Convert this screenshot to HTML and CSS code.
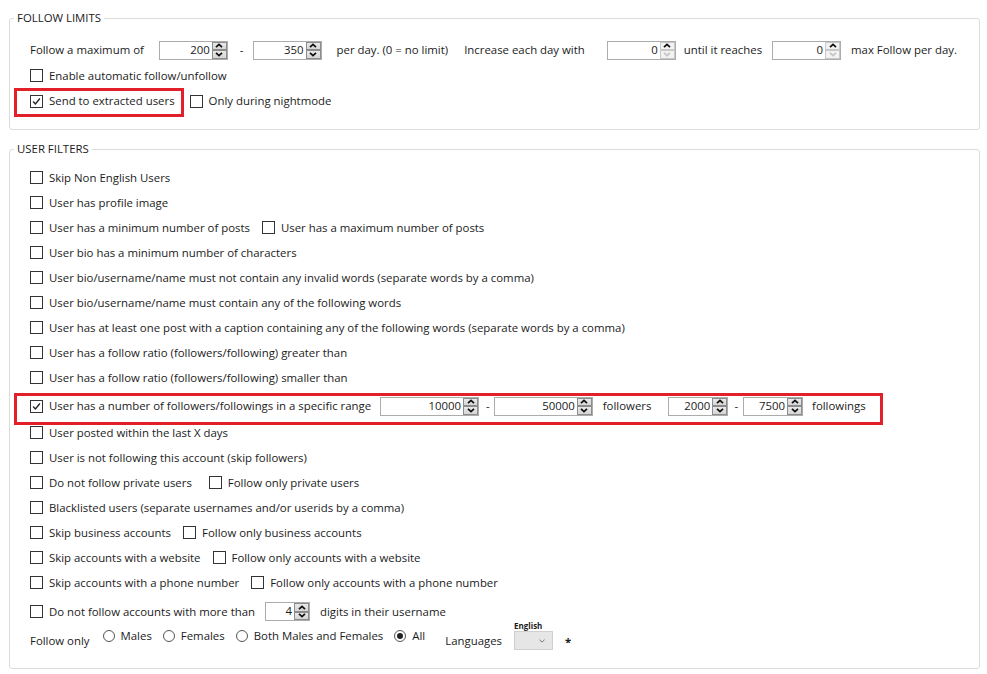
FILE: index.html
```html
<!DOCTYPE html>
<html lang="en">
<head>
    <meta charset="UTF-8">
    <title>Follow settings</title>
    <link rel="stylesheet" href="styles.css">
</head>
<body>
<div class="page">

    <fieldset class="group limits">
        <legend>FOLLOW LIMITS</legend>

        <div class="row row-first">
            <span class="text">Follow a maximum of</span>
            <span class="spin spin-md gap-15"><span class="spin-value">200</span><span class="spin-buttons"><span class="spin-btn"><svg viewBox="0 0 8 5"><polyline points="1,4.2 4,1.4 7,4.2"/></svg></span><span class="spin-btn"><svg viewBox="0 0 8 5"><polyline points="1,0.8 4,3.6 7,0.8"/></svg></span></span></span>
            <span class="text gap-12">-</span>
            <span class="spin spin-md gap-9"><span class="spin-value">350</span><span class="spin-buttons"><span class="spin-btn"><svg viewBox="0 0 8 5"><polyline points="1,4.2 4,1.4 7,4.2"/></svg></span><span class="spin-btn"><svg viewBox="0 0 8 5"><polyline points="1,0.8 4,3.6 7,0.8"/></svg></span></span></span>
            <span class="text gap-15">per day. (0 = no limit)</span>
            <span class="text gap-16">Increase each day with</span>
            <span class="spin spin-md gap-22"><span class="spin-value">0</span><span class="spin-buttons"><span class="spin-btn soft"><svg viewBox="0 0 8 5"><polyline points="1,4.2 4,1.4 7,4.2"/></svg></span><span class="spin-btn soft off"><svg viewBox="0 0 8 5"><polyline points="1,0.8 4,3.6 7,0.8"/></svg></span></span></span>
            <span class="text gap-8">until it reaches</span>
            <span class="spin spin-md gap-10"><span class="spin-value">0</span><span class="spin-buttons"><span class="spin-btn soft"><svg viewBox="0 0 8 5"><polyline points="1,4.2 4,1.4 7,4.2"/></svg></span><span class="spin-btn soft off"><svg viewBox="0 0 8 5"><polyline points="1,0.8 4,3.6 7,0.8"/></svg></span></span></span>
            <span class="text gap-10">max Follow per day.</span>
        </div>

        <div class="row">
            <label class="check"><span class="box"></span>Enable automatic follow/unfollow</label>
        </div>

        <div class="row row-marked">
            <span class="mark mark-small">
                <label class="check"><span class="box checked"><svg viewBox="0 0 13 13"><polyline points="2.5,6.5 5.2,9.3 10.5,3"/></svg></span>Send to extracted users</label>
            </span>
            <label class="check gap-6 beside-mark"><span class="box"></span>Only during nightmode</label>
        </div>
    </fieldset>

    <fieldset class="group filters">
        <legend>USER FILTERS</legend>

        <div class="row"><label class="check"><span class="box"></span>Skip Non English Users</label></div>
        <div class="row"><label class="check"><span class="box"></span>User has profile image</label></div>
        <div class="row">
            <label class="check"><span class="box"></span>User has a minimum number of posts</label>
            <label class="check gap-12"><span class="box"></span>User has a maximum number of posts</label>
        </div>
        <div class="row"><label class="check"><span class="box"></span>User bio has a minimum number of characters</label></div>
        <div class="row"><label class="check"><span class="box"></span>User bio/username/name must not contain any invalid words (separate words by a comma)</label></div>
        <div class="row"><label class="check"><span class="box"></span>User bio/username/name must contain any of the following words</label></div>
        <div class="row"><label class="check"><span class="box"></span>User has at least one post with a caption containing any of the following words (separate words by a comma)</label></div>
        <div class="row"><label class="check"><span class="box"></span>User has a follow ratio (followers/following) greater than</label></div>
        <div class="row"><label class="check"><span class="box"></span>User has a follow ratio (followers/following) smaller than</label></div>

        <div class="mark mark-range">
            <label class="check"><span class="box checked"><svg viewBox="0 0 13 13"><polyline points="2.5,6.5 5.2,9.3 10.5,3"/></svg></span>User has a number of followers/followings in a specific range</label>
            <span class="spin spin-lg gap-9"><span class="spin-value">10000</span><span class="spin-buttons"><span class="spin-btn"><svg viewBox="0 0 8 5"><polyline points="1,4.2 4,1.4 7,4.2"/></svg></span><span class="spin-btn"><svg viewBox="0 0 8 5"><polyline points="1,0.8 4,3.6 7,0.8"/></svg></span></span></span>
            <span class="text gap-7">-</span>
            <span class="spin spin-lg gap-4"><span class="spin-value">50000</span><span class="spin-buttons"><span class="spin-btn"><svg viewBox="0 0 8 5"><polyline points="1,4.2 4,1.4 7,4.2"/></svg></span><span class="spin-btn"><svg viewBox="0 0 8 5"><polyline points="1,0.8 4,3.6 7,0.8"/></svg></span></span></span>
            <span class="text gap-10">followers</span>
            <span class="spin spin-sm gap-17"><span class="spin-value">2000</span><span class="spin-buttons"><span class="spin-btn"><svg viewBox="0 0 8 5"><polyline points="1,4.2 4,1.4 7,4.2"/></svg></span><span class="spin-btn"><svg viewBox="0 0 8 5"><polyline points="1,0.8 4,3.6 7,0.8"/></svg></span></span></span>
            <span class="text gap-6">-</span>
            <span class="spin spin-sm gap-5"><span class="spin-value">7500</span><span class="spin-buttons"><span class="spin-btn"><svg viewBox="0 0 8 5"><polyline points="1,4.2 4,1.4 7,4.2"/></svg></span><span class="spin-btn"><svg viewBox="0 0 8 5"><polyline points="1,0.8 4,3.6 7,0.8"/></svg></span></span></span>
            <span class="text gap-9">followings</span>
        </div>

        <div class="row"><label class="check"><span class="box"></span>User posted within the last X days</label></div>
        <div class="row"><label class="check"><span class="box"></span>User is not following this account (skip followers)</label></div>
        <div class="row">
            <label class="check"><span class="box"></span>Do not follow private users</label>
            <label class="check gap-17"><span class="box"></span>Follow only private users</label>
        </div>
        <div class="row"><label class="check"><span class="box"></span>Blacklisted users (separate usernames and/or userids by a comma)</label></div>
        <div class="row">
            <label class="check"><span class="box"></span>Skip business accounts</label>
            <label class="check gap-12"><span class="box"></span>Follow only business accounts</label>
        </div>
        <div class="row">
            <label class="check"><span class="box"></span>Skip accounts with a website</label>
            <label class="check gap-12"><span class="box"></span>Follow only accounts with a website</label>
        </div>
        <div class="row">
            <label class="check"><span class="box"></span>Skip accounts with a phone number</label>
            <label class="check gap-12"><span class="box"></span>Follow only accounts with a phone number</label>
        </div>

        <div class="row row-digits">
            <label class="check"><span class="box"></span>Do not follow accounts with more than</label>
            <span class="spin spin-xs gap-10"><span class="spin-value">4</span><span class="spin-buttons"><span class="spin-btn"><svg viewBox="0 0 8 5"><polyline points="1,4.2 4,1.4 7,4.2"/></svg></span><span class="spin-btn"><svg viewBox="0 0 8 5"><polyline points="1,0.8 4,3.6 7,0.8"/></svg></span></span></span>
            <span class="text gap-10">digits in their username</span>
        </div>

        <div class="row row-gender">
            <span class="text follow-only">Follow only</span>
            <div class="radios">
                <label class="radio"><span class="dot"></span>Males</label>
                <label class="radio"><span class="dot"></span>Females</label>
                <label class="radio"><span class="dot"></span>Both Males and Females</label>
                <label class="radio"><span class="dot on"></span>All</label>
            </div>
            <span class="text languages">Languages</span>
            <div class="lang">
                <span class="lang-label">English</span>
                <span class="select"><svg viewBox="0 0 7 4"><polyline points="0.5,0.5 3.5,3.3 6.5,0.5"/></svg></span>
            </div>
            <span class="star">*</span>
        </div>
    </fieldset>

</div>
</body>
</html>
```

FILE: styles.css
```css
* {
    margin: 0;
    padding: 0;
    box-sizing: border-box;
}

body {
    font-family: "Open Sans", "Noto Sans", sans-serif;
    font-size: 11.4px;
    color: #1b1b1b;
    background: #fff;
}

.page {
    padding: 10px 7px 0 9px;
}

.group {
    border: 1px solid #dcdcdc;
    border-radius: 3px;
    padding: 0 10px 0 20px;
}

.group legend {
    margin-left: -16px;
    padding: 0 3px;
    font-size: 11.4px;
    line-height: 16px;
}

.limits {
    padding-top: 11px;
    padding-bottom: 12px;
}

.filters {
    margin-top: 11px;
    padding-top: 8px;
    padding-bottom: 14px;
}

.row {
    display: flex;
    align-items: center;
    height: 25px;
    white-space: nowrap;
}

.row-first {
    height: 26px;
}

.row-marked {
    height: 29px;
}

.text {
    line-height: 16px;
}

/* spacing between inline items */
.gap-4 { margin-left: 4px; }
.gap-5 { margin-left: 5px; }
.gap-6 { margin-left: 6px; }
.gap-7 { margin-left: 7px; }
.gap-8 { margin-left: 8px; }
.gap-9 { margin-left: 9px; }
.gap-10 { margin-left: 10px; }
.gap-12 { margin-left: 12px; }
.gap-15 { margin-left: 15px; }
.gap-16 { margin-left: 16px; }
.gap-17 { margin-left: 17px; }
.gap-22 { margin-left: 22px; }

/* checkbox */
.check {
    display: inline-flex;
    align-items: center;
    line-height: 16px;
}

.check .box {
    width: 13px;
    height: 13px;
    border: 1px solid #333;
    background: #fff;
    margin-right: 6px;
    display: inline-flex;
    align-items: center;
    justify-content: center;
}

.check .box svg {
    width: 11px;
    height: 11px;
    fill: none;
    stroke: #222;
    stroke-width: 1.6;
}

/* red annotation boxes */
.mark {
    border: 3px solid #e2202c;
    display: flex;
    align-items: center;
    white-space: nowrap;
}

.mark-small {
    height: 29px;
    margin-left: -16px;
    padding: 0 6px 3px 13px;
}

.beside-mark {
    margin-bottom: 3px;
}

.mark-range {
    width: 869px;
    height: 32px;
    margin: 3px 0 -5px -16px;
    padding: 0 0 6px 13px;
}

/* numeric up/down */
.spin {
    display: inline-flex;
    height: 19px;
    border: 1px solid #acacac;
    background: #fff;
    line-height: 15px;
}

.spin-value {
    flex: 1;
    text-align: right;
    padding: 0 2px 0 0;
}

.spin-buttons {
    width: 15px;
    display: flex;
    flex-direction: column;
}

.spin-btn {
    height: 8.5px;
    border: 1px solid #8c8c8c;
    background: linear-gradient(#e9e9e9, #d6d6d6);
    display: flex;
    align-items: center;
    justify-content: center;
}

.spin-btn svg {
    width: 8px;
    height: 5px;
    fill: none;
    stroke: #111;
    stroke-width: 1.8;
}

.spin-btn.soft {
    border-color: #c8c8c8;
    background: #f2f2f2;
}

.spin-btn.off svg {
    stroke: #c4c4c4;
}

.spin-md { width: 69px; }
.spin-lg { width: 99px; }
.spin-sm { width: 60px; }
.spin-xs { width: 45px; }

.row-digits {
    height: 33px;
}

/* gender row */
.row-gender {
    height: 26px;
}

.follow-only {
    margin-right: 13px;
}

.radios {
    display: flex;
    align-items: center;
    margin-bottom: 10px;
}

.radio {
    display: inline-flex;
    align-items: center;
    line-height: 16px;
    margin-right: 11px;
}

.radio:last-child {
    margin-right: 0;
}

.radio .dot {
    width: 12px;
    height: 12px;
    border: 1px solid #555;
    border-radius: 50%;
    margin-right: 6px;
    display: inline-flex;
    align-items: center;
    justify-content: center;
}

.radio .dot.on::after {
    content: "";
    width: 6px;
    height: 6px;
    border-radius: 50%;
    background: #222;
}

.languages {
    margin-left: 20px;
}

.lang {
    display: flex;
    flex-direction: column;
    margin-left: 12px;
    margin-bottom: 11px;
}

.lang-label {
    font-size: 8px;
    font-weight: bold;
    line-height: 10px;
}

.select {
    width: 39px;
    height: 19px;
    background: #e6e6e6;
    border: 1px solid #cfcfcf;
    display: flex;
    align-items: center;
    justify-content: flex-end;
    padding-right: 7px;
}

.select svg {
    width: 6px;
    height: 4px;
    fill: none;
    stroke: #666;
    stroke-width: 1;
}

.star {
    margin-left: 12px;
    font-weight: bold;
}
```
